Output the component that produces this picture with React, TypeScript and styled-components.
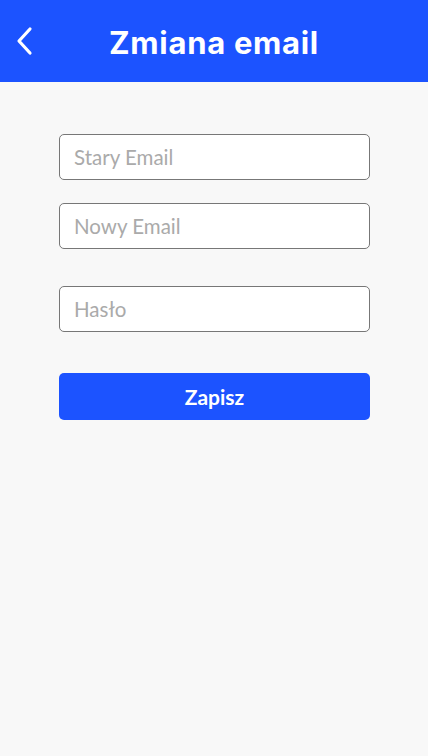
import React from "react";
import styled, { createGlobalStyle } from "styled-components";

const Global = createGlobalStyle`
  html, body { margin: 0; padding: 0; background: #f8f8f8; }
  body { font-family: Lato, "Open Sans", sans-serif; }
  * { box-sizing: border-box; }
`;

const Page = styled.div`
  min-height: 756px;
  background: #f8f8f8;
  display: flex;
  flex-direction: column;
`;

const Header = styled.header`
  height: 82px;
  background: #1c53ff;
  display: grid;
  grid-template-columns: 60px 1fr 60px;
  align-items: center;
`;

const BackButton = styled.button`
  background: none;
  border: none;
  padding: 0 0 0 14px;
  margin-top: -1px;
  display: flex;
  align-items: center;
  cursor: pointer;
`;

const Title = styled.h1`
  margin: 0;
  margin-top: 2px;
  text-align: center;
  color: #fff;
  font-family: Inter, "Open Sans", sans-serif;
  font-weight: 700;
  font-size: 31px;
  letter-spacing: 0.7px;
`;

const Form = styled.form`
  padding: 52px 58px 0 59px;
  display: flex;
  flex-direction: column;
`;

const Field = styled.input<{ $gap: number }>`
  height: 46px;
  width: 100%;
  margin-bottom: ${(p) => p.$gap}px;
  border: 1px solid #777;
  border-radius: 5px;
  background: #fff;
  padding: 0 14px;
  font-family: Lato, sans-serif;
  font-size: 20.5px;
  color: #333;
  outline: none;
  &::placeholder { color: #aaa; }
`;

const SaveButton = styled.button`
  height: 47px;
  width: 100%;
  border: none;
  border-radius: 5px;
  background: #1c53ff;
  color: #fff;
  font-family: Lato, sans-serif;
  font-weight: 700;
  font-size: 21px;
  cursor: pointer;
`;

export default function App() {
  return (
    <Page>
      <Global />
      <Header>
        <BackButton aria-label="Wstecz">
          <svg width="20" height="30" viewBox="0 0 20 30">
            <path d="M16 3 L5 15 L16 27" fill="none" stroke="#fff" strokeWidth="3.2" strokeLinecap="round" strokeLinejoin="round" />
          </svg>
        </BackButton>
        <Title>Zmiana email</Title>
        <div />
      </Header>
      <Form onSubmit={(e) => e.preventDefault()}>
        <Field $gap={23} placeholder="Stary Email" />
        <Field $gap={37} placeholder="Nowy Email" />
        <Field $gap={41} placeholder="Hasło" type="password" />
        <SaveButton type="submit">Zapisz</SaveButton>
      </Form>
    </Page>
  );
}
